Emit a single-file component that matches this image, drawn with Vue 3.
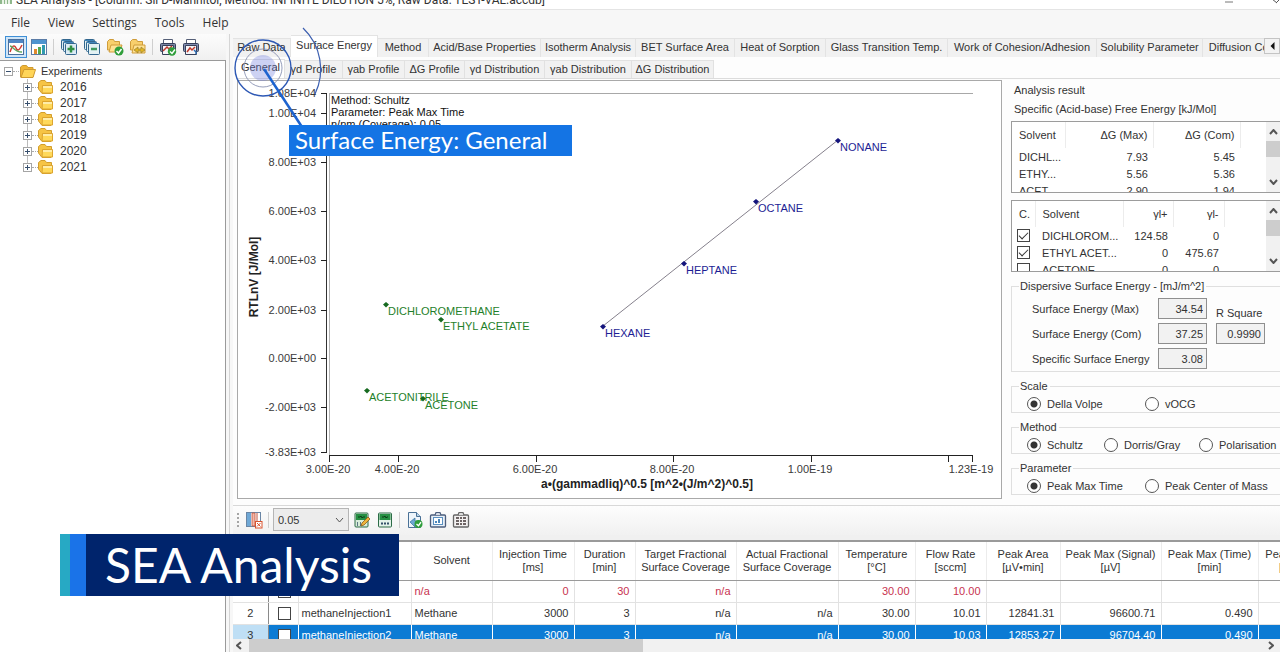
<script setup>
import { ref } from 'vue'

const menus = ['File', 'View', 'Settings', 'Tools', 'Help']
const years = ['2016', '2017', '2018', '2019', '2020', '2021']

const tabs = [
  { name: 'Raw Data', w: 58 },
  { name: 'Surface Energy', w: 87 },
  { name: 'Method', w: 51 },
  { name: 'Acid/Base Properties', w: 112 },
  { name: 'Isotherm Analysis', w: 95 },
  { name: 'BET Surface Area', w: 99 },
  { name: 'Heat of Sorption', w: 91 },
  { name: 'Glass Transition Temp.', w: 122 },
  { name: 'Work of Cohesion/Adhesion', w: 149 },
  { name: 'Solubility Parameter', w: 106 },
  { name: 'Diffusion Coefficient', w: 110 },
]
const subTabs = [
  { name: 'General', w: 48 },
  { name: 'γd Profile', w: 58 },
  { name: 'γab Profile', w: 62 },
  { name: 'ΔG Profile', w: 60 },
  { name: 'γd Distribution', w: 80 },
  { name: 'γab Distribution', w: 87 },
  { name: 'ΔG Distribution', w: 82 },
]
const activeTab = ref('Surface Energy')
const activeSub = ref('General')

const yTicks = [
  { y: 13, t: '1.08E+04' },
  { y: 33, t: '1.00E+04' },
  { y: 82, t: '8.00E+03' },
  { y: 131, t: '6.00E+03' },
  { y: 180, t: '4.00E+03' },
  { y: 230, t: '2.00E+03' },
  { y: 278, t: '0.00E+00' },
  { y: 327, t: '-2.00E+03' },
  { y: 372, t: '-3.83E+03' },
]
const xTicks = [
  { x: 92, t: '3.00E-20' },
  { x: 161, t: '4.00E-20' },
  { x: 299, t: '6.00E-20' },
  { x: 436, t: '8.00E-20' },
  { x: 574, t: '1.00E-19' },
  { x: 711, t: '' },
  { x: 735, t: '1.23E-19' },
]
const points = [
  { x: 149, y: 224, t: 'DICHLOROMETHANE', k: 'polar' },
  { x: 204, y: 239, t: 'ETHYL ACETATE', k: 'polar' },
  { x: 130, y: 310, t: 'ACETONITRILE', k: 'polar' },
  { x: 186, y: 318, t: 'ACETONE', k: 'polar' },
  { x: 366, y: 246, t: 'HEXANE', k: 'alkane' },
  { x: 447, y: 183, t: 'HEPTANE', k: 'alkane' },
  { x: 519, y: 121, t: 'OCTANE', k: 'alkane' },
  { x: 601, y: 60, t: 'NONANE', k: 'alkane' },
]

const freeEnergy = [
  ['DICHL...', '7.93', '5.45'],
  ['ETHY...', '5.56', '5.36'],
  ['ACET...', '2.90', '1.94'],
]
const solvents = ref([
  { on: true, name: 'DICHLOROM...', plus: '124.58', minus: '0' },
  { on: true, name: 'ETHYL ACET...', plus: '0', minus: '475.67' },
  { on: false, name: 'ACETONE', plus: '0', minus: '0' },
])

const groups = ref([
  { name: 'Scale', value: 'Della Volpe', options: [{ t: 'Della Volpe', w: 118 }, { t: 'vOCG', w: 110 }] },
  { name: 'Method', value: 'Schultz', options: [{ t: 'Schultz', w: 77 }, { t: 'Dorris/Gray', w: 95 }, { t: 'Polarisation', w: 80 }] },
  { name: 'Parameter', value: 'Peak Max Time', options: [{ t: 'Peak Max Time', w: 118 }, { t: 'Peak Center of Mass', w: 124 }] },
])

const columns = [
  { w: 35, t: [] },
  { w: 30, t: [] },
  { w: 113, t: [] },
  { w: 81, t: ['Solvent'] },
  { w: 82, t: ['Injection Time', '[ms]'] },
  { w: 61, t: ['Duration', '[min]'] },
  { w: 101, t: ['Target Fractional', 'Surface Coverage'] },
  { w: 102, t: ['Actual Fractional', 'Surface Coverage'] },
  { w: 77, t: ['Temperature', '[°C]'] },
  { w: 71, t: ['Flow Rate', '[sccm]'] },
  { w: 74, t: ['Peak Area', '[µV•min]'] },
  { w: 101, t: ['Peak Max (Signal)', '[µV]'] },
  { w: 97, t: ['Peak Max (Time)', '[min]'] },
  { w: 66, t: ['Peak Com', '[min]'] },
]
const injections = [
  { n: '', kind: 'red', name: '', solvent: 'n/a', v: ['0', '30', 'n/a', '', '30.00', '10.00', '', '', '', ''] },
  { n: '2', kind: '', name: 'methaneInjection1', solvent: 'Methane', v: ['3000', '3', 'n/a', 'n/a', '30.00', '10.01', '12841.31', '96600.71', '0.490', ''] },
  { n: '3', kind: 'selected', name: 'methaneInjection2', solvent: 'Methane', v: ['3000', '3', 'n/a', 'n/a', '30.00', '10.03', '12853.27', '96704.40', '0.490', ''] },
]
const tableWidth = columns.reduce((sum, c) => sum + c.w, 0)
</script>

<template>
  <div class="window">
    <header class="title-bar">
      <svg class="app-icon" width="12" height="12" viewBox="0 0 12 12"><path d="M0 0h12v11H0z" fill="#8fb88c" /><path d="M2 11V5h2v6M5 11V2h2v9M8 11V6h2v5" fill="#e9f3e6" /></svg>
      <span>SEA Analysis - [Column: Sil D-Mannitol, Method: INFINITE DILUTION 5%, Raw Data: TEST-VAL.accdb]</span>
      <svg class="win-buttons" width="60" height="10" viewBox="0 0 60 10"><path d="M5 3h8" stroke="#777" /><path d="M52 0l5 4M60 0l-4 4" stroke="#555" /></svg>
    </header>
    <nav class="menu-bar">
      <button v-for="m in menus" :key="m" type="button">{{ m }}</button>
    </nav>

    <div class="body">
      <aside class="left">
        <div class="tool-strip">
          <button class="tool pressed" type="button" aria-label="Chart view">
            <svg width="18" height="18" viewBox="0 0 18 18"><rect x="1.500" y="1.500" width="15" height="15" fill="#fff" stroke="#4b6f9c" /><path d="M2 2h14v3H2z" fill="#4f86c4" /><path d="M3 14c2-6 4-8 6-4s4 1 6-3" fill="none" stroke="#cf3b32" stroke-width="1.500" /><path d="M3 8c3 0 4 6 12 6" fill="none" stroke="#5ba45b" stroke-width="1.300" /></svg>
          </button>
          <button class="tool" type="button" aria-label="Histogram view">
            <svg width="18" height="18" viewBox="0 0 18 18"><rect x="1.500" y="1.500" width="15" height="15" fill="#fff" stroke="#5b7ca6" /><path d="M2 2h14v4H2z" fill="#4e94cf" /><path d="M4 11h3v5H4z" fill="#e08a2c" /><path d="M8 9h3v7H8z" fill="#55a84f" /><path d="M12 7h3v9h-3z" fill="#2f9ab0" /></svg>
          </button>
          <i class="sep"></i>
          <button class="tool" type="button" aria-label="Expand all">
            <svg width="18" height="18" viewBox="0 0 18 18"><g fill="#dcebf5" stroke="#33678f"><rect x="1.500" y="1.500" width="10" height="10" rx="1" /><rect x="3.500" y="3.500" width="10" height="10" rx="1" /><rect x="5.500" y="5.500" width="11" height="11" rx="1" /></g><path d="M2 2h9v1H2zM4 4h9v1H4z" fill="#3f86bb" /><path d="M11 7.500v7M7.500 11h7" stroke="#2f8f43" stroke-width="2.500" /></svg>
          </button>
          <button class="tool" type="button" aria-label="Collapse all">
            <svg width="18" height="18" viewBox="0 0 18 18"><g fill="#e2f1f3" stroke="#33678f"><rect x="1.500" y="1.500" width="10" height="10" rx="1" /><rect x="3.500" y="3.500" width="10" height="10" rx="1" /><rect x="5.500" y="5.500" width="11" height="11" rx="1" /></g><path d="M2 2h9v1H2zM4 4h9v1H4z" fill="#3f86bb" /><path d="M8 11h6" stroke="#3d9a60" stroke-width="2.500" /></svg>
          </button>
          <button class="tool" type="button" aria-label="Apply folder">
            <svg width="18" height="18" viewBox="0 0 18 18"><path d="M1.500 12V3.500l2-2h4l1 2h5V12z" fill="#f8cf6c" stroke="#cf9c3a" /><path d="M3 14l2-7h11l-2 7z" fill="#ffe293" stroke="#cf9c3a" /><circle cx="13" cy="13" r="4.500" fill="#2f9e3b" /><path d="M10.500 13l2 2 3-4" fill="none" stroke="#fff" stroke-width="1.500" /></svg>
          </button>
          <button class="tool" type="button" aria-label="Swap folder">
            <svg width="18" height="18" viewBox="0 0 18 18"><path d="M1.500 12V3.500l2-2h4l1 2h5V12z" fill="#f8cf6c" stroke="#cf9c3a" /><path d="M3 15l2-8h11v8z" fill="#ffe293" stroke="#cf9c3a" /><path d="M5 12l4-3v2h3V9l4 3-4 3v-2H9v2z" fill="#e0b422" stroke="#9a8030" stroke-width=".7" /></svg>
          </button>
          <i class="sep"></i>
          <button class="tool" type="button" aria-label="Accept report">
            <svg width="18" height="18" viewBox="0 0 18 18"><path d="M4.500 1.500h9v4h-9z" fill="#fff" stroke="#555f77" /><rect x="1.500" y="5.500" width="15" height="8" rx="1" fill="#7a86a3" stroke="#37405a" /><path d="M3.500 7.500h11v9h-11z" fill="#f5f5f8" stroke="#37405a" /><path d="M4 13l4-4 2 2 3-3" fill="none" stroke="#c0392b" stroke-width="1.500" /><circle cx="13" cy="13.500" r="4.200" fill="#2f9e3b" /><path d="M11 13.500l2 2 3-4" fill="none" stroke="#fff" stroke-width="1.400" /></svg>
          </button>
          <button class="tool" type="button" aria-label="Print report">
            <svg width="18" height="18" viewBox="0 0 18 18"><path d="M4.500 1.500h9v4h-9z" fill="#fff" stroke="#555f77" /><rect x="1.500" y="5.500" width="15" height="8" rx="1" fill="#7f8cb0" stroke="#37405a" /><path d="M3.500 7.500h11v9h-11z" fill="#f5f5f8" stroke="#37405a" /><path d="M5 14l3-4 2 2 3-3" fill="none" stroke="#c0392b" stroke-width="1.500" /><path d="M12 12l2 2v2" stroke="#2d6bb0" stroke-width="1.500" fill="none" /></svg>
          </button>
        </div>

        <div class="tree">
          <div class="root-row">
            <svg class="expander" width="9" height="9" viewBox="0 0 9 9"><rect x=".5" y=".5" width="8" height="8" fill="#fff" stroke="#a5a5a5" /><path d="M2 4.500h5" stroke="#38506e" /></svg>
            <i class="dots"></i>
            <svg width="18" height="15" viewBox="0 0 18 15"><path d="M1.500 13V3l2-1.500h4l1.500 2h5V13z" fill="#f0b535" stroke="#cf9a30" /><path d="M2 13.500l3-8h11.500l-2.500 8z" fill="#ffd558" stroke="#cf9a30" /></svg>
            <span>Experiments</span>
          </div>
          <div class="branch">
            <div v-for="y in years" :key="y" class="year-row">
              <svg class="expander" width="9" height="9" viewBox="0 0 9 9"><rect x=".5" y=".5" width="8" height="8" fill="#fff" stroke="#a5a5a5" /><path d="M2 4.500h5M4.500 2v5" stroke="#38506e" /></svg>
              <i class="dots"></i>
              <svg width="16" height="14" viewBox="0 0 16 14"><path d="M.5 9V2.500L3 .5h4l1.500 2h5V9L13 13.500H4z" fill="#f6c445" stroke="#d39e2c" /><path d="M4.500 5.500h10v7.500H4z" fill="#ffd95a" stroke="#dda52f" /><path d="M5 6h9v2H5z" fill="#ffedaa" /></svg>
              <span>{{ y }}</span>
            </div>
          </div>
        </div>
      </aside>

      <main class="right">
        <div class="tabs" role="tablist">
          <button
            v-for="t in tabs" :key="t.name" type="button" role="tab"
            :aria-selected="t.name === activeTab"
            :class="['tab', { active: t.name === activeTab }]"
            :style="{ flexBasis: t.w + 'px' }" @click="activeTab = t.name"
          >{{ t.name }}</button>
          <button class="tab-scroll" type="button" aria-label="Scroll tabs left">
            <svg width="5" height="8" viewBox="0 0 5 8"><path d="M4.500 0v8L.5 4z" fill="#111" /></svg>
          </button>
        </div>

        <section class="page">
          <div class="sub-tabs" role="tablist">
            <button
              v-for="t in subTabs" :key="t.name" type="button" role="tab"
              :aria-selected="t.name === activeSub"
              :class="['sub-tab', { active: t.name === activeSub }]"
              :style="{ flexBasis: t.w + 'px' }" @click="activeSub = t.name"
            >{{ t.name }}</button>
          </div>

          <div class="content">
            <div class="chart">
              <svg viewBox="0 0 763 417" preserveAspectRatio="xMinYMin meet">
                <path d="M91 12.500H735" stroke="#a8a8a8" />
                <path d="M91.500 12V374" stroke="#b4b4b4" />
                <path d="M88.500 13V372" stroke="#333" stroke-width="1" />
                <path d="M91 374.500H735" stroke="#222" />
                <g v-for="t in yTicks" :key="t.t">
                  <path :d="`M83 ${t.y - 0.5}h6`" stroke="#222" />
                  <text x="78" :y="t.y + 3" class="tick end">{{ t.t }}</text>
                </g>
                <g v-for="t in xTicks" :key="t.x">
                  <path :d="`M${t.x - 0.5} 374v7`" stroke="#222" />
                  <text :x="t.x - 2" y="392" class="tick mid">{{ t.t }}</text>
                </g>
                <text x="93" y="23" class="note">Method: Schultz</text>
                <text x="93" y="35" class="note">Parameter: Peak Max Time</text>
                <text x="93" y="47" class="note">n/nm (Coverage): 0.05</text>
                <path d="M365 245L600 59" stroke="#85808c" />
                <g v-for="p in points" :key="p.t" :class="p.k">
                  <path :d="`M${p.x - 1} ${p.y - 3}l3 2.500-3 3-3-3z`" />
                  <text :x="p.x + 1" :y="p.y + 10">{{ p.t }}</text>
                </g>
                <text x="409" y="407" class="axis mid">a•(gammadliq)^0.5 [m^2•(J/m^2)^0.5]</text>
                <text transform="translate(20 196) rotate(-90)" class="axis mid">RTLnV [J/Mol]</text>
              </svg>
            </div>

            <div class="side">
              <h2>Analysis result</h2>
              <h2 class="last">Specific (Acid-base) Free Energy [kJ/Mol]</h2>

              <div class="list">
                <div class="list-view">
                  <table class="energy">
                    <thead><tr><th class="c-solvent">Solvent</th><th class="c-max num">ΔG (Max)</th><th class="c-com num">ΔG (Com)</th><th></th></tr></thead>
                    <tbody>
                      <tr v-for="r in freeEnergy" :key="r[0]"><td>{{ r[0] }}</td><td class="num">{{ r[1] }}</td><td class="num">{{ r[2] }}</td><td></td></tr>
                    </tbody>
                  </table>
                </div>
                <div class="v-scroll">
                  <svg width="9" height="6" viewBox="0 0 9 6"><path d="M1 5l3.500-4L8 5" /></svg>
                  <b></b>
                  <svg width="9" height="6" viewBox="0 0 9 6"><path d="M1 1l3.500 4L8 1" /></svg>
                </div>
              </div>

              <div class="list">
                <div class="list-view">
                  <table class="acid">
                    <thead><tr><th class="c-check">C.</th><th class="c-name">Solvent</th><th class="c-plus num">γl+</th><th class="c-minus num">γl-</th><th></th></tr></thead>
                    <tbody>
                      <tr v-for="s in solvents" :key="s.name">
                        <td><input v-model="s.on" type="checkbox" :aria-label="s.name" /></td>
                        <td>{{ s.name }}</td><td class="num">{{ s.plus }}</td><td class="num">{{ s.minus }}</td><td></td>
                      </tr>
                    </tbody>
                  </table>
                </div>
                <div class="v-scroll">
                  <svg width="9" height="6" viewBox="0 0 9 6"><path d="M1 5l3.500-4L8 5" /></svg>
                  <b></b>
                  <svg width="9" height="6" viewBox="0 0 9 6"><path d="M1 1l3.500 4L8 1" /></svg>
                </div>
              </div>

              <fieldset class="dispersive">
                <legend>Dispersive Surface Energy - [mJ/m^2]</legend>
                <div class="dispersive-body">
                  <div class="fields">
                    <label for="se-max">Surface Energy (Max)</label><input id="se-max" type="text" value="34.54" readonly />
                    <label for="se-com">Surface Energy (Com)</label><input id="se-com" type="text" value="37.25" readonly />
                    <label for="se-spec">Specific Surface Energy</label><input id="se-spec" type="text" value="3.08" readonly />
                  </div>
                  <div class="r-square">
                    <label for="r-sq">R Square</label><input id="r-sq" type="text" value="0.9990" readonly />
                  </div>
                </div>
              </fieldset>

              <fieldset v-for="g in groups" :key="g.name">
                <legend>{{ g.name }}</legend>
                <div class="radios">
                  <label v-for="o in g.options" :key="o.t" :style="{ flexBasis: o.w + 'px' }">
                    <input v-model="g.value" type="radio" :name="g.name" :value="o.t" />{{ o.t }}
                  </label>
                </div>
              </fieldset>
            </div>
          </div>
        </section>

        <div class="grid-tools">
          <i class="grip"></i>
          <button class="tool" type="button" aria-label="Remove column">
            <svg width="18" height="18" viewBox="0 0 18 18"><rect x="1.500" y="1.500" width="14" height="14" fill="#fff" stroke="#6a86a5" /><path d="M2 2h4v13H2z" fill="#6fa8d6" /><path d="M7 2h3v13H7z" fill="#f3b7a8" stroke="#c2543c" stroke-width=".8" /><path d="M12 2v13" stroke="#c2543c" /><rect x="10.500" y="10.500" width="6.500" height="6.500" fill="#fff" stroke="#d9532f" /><path d="M12 12l3.500 3.500M15.500 12L12 15.500" stroke="#d9532f" /></svg>
          </button>
          <i class="sep"></i>
          <select aria-label="Coverage"><option>0.05</option></select>
          <button class="tool" type="button" aria-label="Edit calculation">
            <svg width="18" height="18" viewBox="0 0 18 18"><rect x="2" y="2" width="13" height="14" rx="1" fill="#d7ecd9" stroke="#2c6b47" /><path d="M3 3h11v6H3z" fill="#269043" /><path d="M5 6h2l1-1 1 2 1-1h2" stroke="#0b3d17" fill="none" /><path d="M4 12h1M7 12h1M4 14h1M7 14h1" stroke="#35506a" stroke-width="1.500" /><path d="M8 15l1-3 6-6 2 2-6 6z" fill="#efb43b" stroke="#8d5a17" stroke-width=".8" /></svg>
          </button>
          <button class="tool" type="button" aria-label="Calculate">
            <svg width="18" height="18" viewBox="0 0 18 18"><rect x="2.500" y="2" width="13" height="14" rx="1" fill="#e3f2ea" stroke="#2c6b47" /><path d="M3.500 3h11v6h-11z" fill="#269043" /><path d="M6 6h2l1-1 1 2 1-1h1" stroke="#0b3d17" fill="none" /><path d="M5 12.500h2M8 12.500h2M11 12.500h2" stroke="#35506a" stroke-width="2" /></svg>
          </button>
          <i class="sep"></i>
          <button class="tool" type="button" aria-label="Export report">
            <svg width="18" height="18" viewBox="0 0 18 18"><path d="M2.500 1.500h8l4 4v11h-12z" fill="#eef5fb" stroke="#4a7196" /><path d="M10.500 1.500v4h4" fill="#bcd6ea" stroke="#4a7196" /><path d="M4 11l5-4v3h5v4H9v2z" fill="#6ca7d3" stroke="#37719b" stroke-width=".7" /><circle cx="12.500" cy="13" r="4" fill="#2f9e3b" /><path d="M10.500 13l2 1.700 2.500-3.500" fill="none" stroke="#fff" stroke-width="1.400" /></svg>
          </button>
          <button class="tool" type="button" aria-label="Copy chart">
            <svg width="18" height="18" viewBox="0 0 18 18"><rect x="1.500" y="4" width="15" height="12" rx="1" fill="#e7eff7" stroke="#4c5d7c" stroke-width="1.300" /><path d="M6 4l1-2.500h4L12 4" fill="#d5dbe6" stroke="#4c5d7c" stroke-width="1.200" /><rect x="4.500" y="6.500" width="9" height="7" fill="#fff" stroke="#5a8fc0" /><path d="M6 12v-2h2v2zM9 12V8h2v4z" fill="#4a86bb" /></svg>
          </button>
          <button class="tool" type="button" aria-label="Copy table">
            <svg width="18" height="18" viewBox="0 0 18 18"><rect x="1.500" y="4" width="15" height="12" rx="1" fill="#f3f1f1" stroke="#666" stroke-width="1.300" /><path d="M6 4l1-2.500h4L12 4" fill="#ddd" stroke="#666" stroke-width="1.200" /><g fill="#6d6464"><path d="M4 6h3v2H4zM8 6h2v2H8zM11 6h3v2h-3zM4 9h3v2H4zM8 9h2v2H8zM11 9h3v2h-3zM4 12h3v2H4zM8 12h2v2H8zM11 12h3v2h-3z" /></g></svg>
          </button>
        </div>

        <div class="grid-pane">
          <div class="grid-view">
            <table class="grid" :style="{ width: tableWidth + 'px' }">
              <colgroup><col v-for="(c, i) in columns" :key="i" :style="{ width: c.w + 'px' }" /></colgroup>
              <thead>
                <tr><th v-for="(c, i) in columns" :key="i"><div v-for="l in c.t" :key="l">{{ l }}</div></th></tr>
              </thead>
              <tbody>
                <tr v-for="(r, k) in injections" :key="k" :class="r.kind">
                  <td class="row-no">{{ r.n }}</td>
                  <td class="pick"><input type="checkbox" :aria-label="'Row ' + (k + 1)" /></td>
                  <td>{{ r.name }}</td>
                  <td>{{ r.solvent }}</td>
                  <td v-for="(v, i) in r.v" :key="i" class="value">{{ v }}</td>
                </tr>
              </tbody>
            </table>
          </div>
          <div class="h-scroll">
            <svg width="6" height="9" viewBox="0 0 6 9"><path d="M5 1L1 4.500 5 8" /></svg>
            <b></b>
            <svg width="6" height="9" viewBox="0 0 6 9"><path d="M1 1l4 3.500L1 8" /></svg>
          </div>
        </div>
      </main>
    </div>

    <svg class="pointer" width="100" height="110" viewBox="0 0 100 110">
      <circle cx="38" cy="43" r="13" fill="#6f7fdc" fill-opacity=".35" />
      <circle cx="38" cy="43" r="19" fill="none" stroke="#7a84a8" stroke-width=".8" />
      <circle cx="38" cy="43" r="28" fill="none" stroke="#2d58b4" stroke-width="1.400" />
      <path d="M78 3A57 57 0 0 1 90 69" fill="none" stroke="#3c5fb0" stroke-width="1.200" />
      <path d="M39 44L77 102" stroke="#1d63cf" stroke-width="2.500" />
    </svg>
    <div class="callout">Surface Energy: General</div>
    <div class="banner">SEA Analysis</div>
  </div>
</template>

<style>
body { margin: 0; overflow: hidden; }
</style>

<style scoped>
* { box-sizing: border-box; }
.window {
  position: relative; display: flex; flex-direction: column; height: 100vh; overflow: hidden;
  background: #f7f7f7; color: #333; font-family: "Liberation Sans", Arial, sans-serif; font-size: 11px;
}
button { font: inherit; color: inherit; border: 0; background: none; padding: 0; white-space: nowrap; }
table { border-collapse: collapse; table-layout: fixed; }

.title-bar {
  display: flex; align-items: flex-end; gap: 4px; flex: none; height: 10px; overflow: hidden;
  background: #fff; border-bottom: 1px solid #e4e4e4; font: 12px/18px Roboto, sans-serif; white-space: nowrap;
}
.app-icon { flex: none; margin-bottom: 4px; }
.win-buttons { margin-left: auto; flex: none; }
.menu-bar {
  display: flex; align-items: center; gap: 18px; flex: none; height: 24px; padding-left: 11px;
  font-family: "Open Sans", sans-serif; font-size: 12px;
}
.body { display: flex; flex: 1; min-height: 0; }

.left { display: flex; flex-direction: column; flex: none; width: 226px; }
.tool-strip { display: flex; align-items: center; gap: 1px; height: 26px; padding-left: 5px; background: linear-gradient(#fcfcfc, #f0f0f0); }
.tool { display: flex; align-items: center; justify-content: center; flex: none; width: 22px; height: 22px; }
.pressed { border: 1px solid #3f8fd6; background: #cfe5f7; }
.sep { flex: none; width: 1px; height: 16px; margin: 0 3px 0 2px; background: #cfcfcf; }

.tree { flex: 1; padding: 2px 0 0 4px; background: #fff; border: 1px solid #9a9a9a; border-width: 1px 1px 0 0; font-size: 11px; }
.root-row, .year-row { display: flex; align-items: center; height: 16px; }
.root-row span { margin-left: 4px; }
.year-row { padding-left: 1px; }
.year-row span { margin-left: 6px; font-size: 12px; }
.branch { margin-left: 18px; background: linear-gradient(#bbb, #bbb) 5px 0 / 1px 89px no-repeat; }
.expander { flex: none; }
.dots { width: 6px; border-top: 1px dotted #aaa; }
.tree svg { flex: none; }

.right { display: flex; flex-direction: column; flex: 1; min-width: 0; margin-left: 3px; padding-left: 3px; border-left: 1px solid #d5d5d5; }
.tabs { position: relative; display: flex; align-items: flex-end; flex: none; height: 23px; overflow: hidden; }
.tab { flex: 0 0 auto; height: 19px; padding-bottom: 2px; background: #f1f1f1; border: 1px solid #e3e3e3; border-width: 1px 1px 0 0; }
.tab.active { height: 22px; padding-bottom: 3px; background: #fff; }
.tab-scroll { position: absolute; right: 0; top: 4px; display: flex; align-items: center; justify-content: center; width: 16px; height: 16px; background: #f3f3f3; border: 1px solid #c4c4c4; }

.page { display: flex; flex-direction: column; flex: 1; min-height: 0; padding: 2px 0 6px 4px; background: #fdfdfd; border-bottom: 1px solid #d8d8d8; }
.sub-tabs { display: flex; align-items: flex-end; flex: none; height: 20px; border-bottom: 1px solid #dcdcdc; }
.sub-tab { flex: 0 0 auto; height: 18px; padding-bottom: 2px; background: #f1f1f1; border: 1px solid #e1e1e1; border-width: 1px 1px 0 0; }
.sub-tab.active { height: 19px; padding-bottom: 4px; background: #fff; }
.content { display: flex; gap: 9px; flex: 1; min-height: 0; padding-top: 1px; }

.chart { flex: 1; min-width: 0; background: #fff; border: 1px solid #a9a9a9; }
.chart svg { display: block; width: 100%; height: 100%; }
.chart text { font-family: "Liberation Sans", Arial, sans-serif; font-size: 11px; fill: #222; }
.chart .tick { fill: #3a3a3a; }
.chart .note { fill: #111; }
.chart .end { text-anchor: end; }
.chart .mid { text-anchor: middle; }
.chart .axis { font-size: 12px; font-weight: bold; }
.chart .polar text { fill: #1f7f2a; }
.chart .polar path { fill: #176a20; }
.chart .alkane text { fill: #1d1d94; }
.chart .alkane path { fill: #14147c; }

.side { display: flex; flex-direction: column; gap: 7px; flex: none; width: 269px; padding-top: 1px; overflow: hidden; }
h2 { margin: 0 0 -7px 3px; font: 11px/19px "Liberation Sans", Arial, sans-serif; white-space: nowrap; }
h2.last { margin-bottom: -5px; }
.list { display: flex; flex: none; height: 72px; background: #fff; border: 1px solid #9c9c9c; border-right: 0; }
.list-view { flex: 1; min-width: 0; overflow: hidden; }
.list table { width: 100%; }
.list th { height: 26px; padding: 0 5px 0 7px; font-weight: normal; text-align: left; border-right: 1px solid #ececec; }
.list th:last-child { border: 0; }
.list td { height: 17px; padding: 0 5px 0 7px; line-height: 16px; white-space: nowrap; }
.list .num { text-align: right; padding-left: 0; }
.c-solvent { width: 53px; }
.c-max { width: 88px; }
.c-com { width: 87px; }
.c-check { width: 23px; }
.acid .c-check { padding-right: 0; }
.c-name { width: 88px; }
.c-plus { width: 50px; }
.c-minus { width: 51px; }
.acid td:first-child { padding: 0 0 0 5px; }
.acid td:first-child input { display: block; }
.v-scroll { display: flex; flex-direction: column; align-items: center; flex: none; width: 14px; padding: 7px 0; background: #f1f1f1; }
.v-scroll b { width: 14px; height: 16px; margin: 6px 0 auto; background: #cdcdcd; }
.v-scroll path, .h-scroll path { fill: none; stroke: #555; stroke-width: 2; }

input[type="checkbox"] { appearance: none; width: 13px; height: 13px; margin: 0; background: #fff; border: 1px solid #444; }
input[type="checkbox"]:checked::after { content: ""; display: block; width: 8px; height: 4px; margin: 2px 0 0 1px; border: 1px solid #333; border-width: 0 0 1px 1px; transform: rotate(-45deg); }

fieldset { flex: none; min-width: 0; height: 34px; margin: 0; padding: 2px 0 0 15px; border: 1px solid #dfdfdf; border-right: 0; }
legend { margin-left: -8px; padding: 0 2px 0 1px; line-height: 14px; }
.dispersive { height: 93px; padding: 5px 0 0 20px; }
.dispersive legend { margin-left: -13px; }
.dispersive-body { display: flex; gap: 9px; }
.fields { display: grid; grid-template-columns: 126px 49px; row-gap: 4px; align-items: center; }
input[type="text"] { width: 49px; height: 21px; margin: 0; padding: 0 3px; background: #f2f2f2; border: 1px solid #8f8f8f; border-radius: 0; color: #333; font: inherit; text-align: right; }
.fields label { white-space: nowrap; }
.r-square { display: flex; flex-direction: column; padding-top: 9px; line-height: 13px; gap: 3px; }
.radios { display: flex; height: 17px; }
.radios label { display: flex; align-items: center; gap: 6px; flex: 0 0 auto; white-space: nowrap; }
input[type="radio"] { appearance: none; flex: none; width: 14px; height: 14px; margin: 0; border: 1px solid #555; border-radius: 50%; background: #fff; }
input[type="radio"]:checked { background: radial-gradient(circle, #333 3px, #fff 4px); }

.grid-tools { display: flex; align-items: center; gap: 1px; flex: none; height: 29px; padding: 0 0 2px 4px; background: linear-gradient(#fdfdfd, #f1f1f1); }
.grip { width: 2px; height: 14px; margin-right: 3px; background: repeating-linear-gradient(#a5a5a5 0 2px, transparent 2px 4px); }
select {
  appearance: none; width: 76px; height: 23px; margin-right: 1px; padding: 0 4px; border: 1px solid #b5b5b5; border-radius: 0; color: #333;
  font: 11px "Liberation Sans", Arial, sans-serif;
  background: #ececec url("data:image/svg+xml,%3Csvg xmlns='http://www.w3.org/2000/svg' width='9' height='6'%3E%3Cpath d='M1 1l3.500 4L8 1' fill='none' stroke='%23555'/%3E%3C/svg%3E") right 4px center no-repeat;
}

.grid-pane { display: flex; flex-direction: column; flex: none; height: 117px; padding-top: 5px; background: #f0f0f0; }
.grid-view { flex: 1; overflow: hidden; background: #fff; border-top: 2px solid #9a9a9a; }
.grid th { height: 38px; padding: 0; font-weight: normal; line-height: 13px; border: 1px solid #ececec; border-width: 0 1px 0 0; border-bottom: 1px solid #9a9a9a; white-space: nowrap; }
.grid td { height: 22px; padding: 0 3px 0 3px; border: 1px solid #e2e2e2; border-width: 0 1px 1px 0; white-space: nowrap; }
.grid .value { padding: 0 5px 0 0; text-align: right; }
.grid .row-no { padding: 0; text-align: center; border-right-color: #8a8a8a; }
.grid .pick { padding: 0 0 0 9px; }
.grid .pick input { display: block; }
.red td { color: #c8324f; }
.red .row-no { color: #333; }
.selected td { background: #0c7bd4; color: #fff; border-color: #fff; }
.selected .row-no { background: #bfdff5; color: #333; }
.h-scroll { display: flex; align-items: center; flex: none; height: 13px; padding: 0 6px 0 3px; background: #f1f1f1; }
.h-scroll b { flex: none; width: 38%; height: 13px; margin: 0 auto 0 7px; background: #cdcdcd; }

.pointer { position: absolute; left: 225px; top: 25px; pointer-events: none; }
.callout { position: absolute; left: 289px; top: 125px; width: 283px; height: 31px; padding-left: 6px; background: #1474e4; color: #fff; font: 24px/30px Lato, sans-serif; white-space: nowrap; }
.banner {
  position: absolute; left: 60px; top: 534px; width: 339px; height: 62px; padding-left: 45px; color: #fff; font: 48px/62px Lato, sans-serif; white-space: nowrap;
  background: linear-gradient(90deg, #27a9c4 0 10px, #1a73e8 10px 26px, #00246c 26px);
}
</style>
